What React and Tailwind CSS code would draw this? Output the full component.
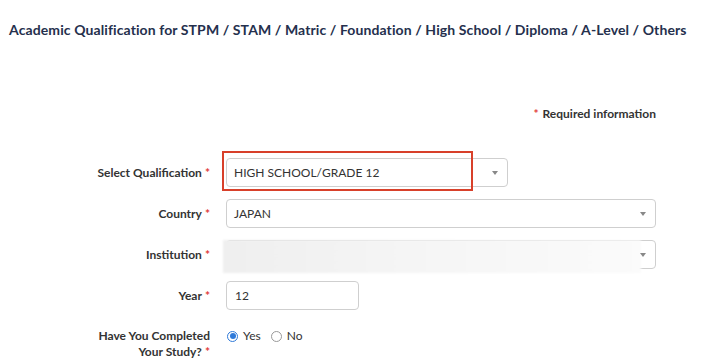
const Req = () => <span className="text-[#e23b3b] ml-[3px]">*</span>

const Caret = () => (
  <span className="absolute right-[9px] top-1/2 -translate-y-1/2 w-0 h-0 border-l-[3px] border-r-[3px] border-t-[4px] border-l-transparent border-r-transparent border-t-[#888]" />
)

const Row = ({ label, children, top = false }) => (
  <div className={`flex ${top ? 'items-start' : 'items-center'}`}>
    <div className="w-[213px] shrink-0 pr-[3px] text-right text-[12px] font-bold text-[#333] leading-[16px]">
      {label}
    </div>
    <div className="flex-1 pl-[13px]">{children}</div>
  </div>
)

const App = () => {
  return (
    <div className="w-[711px] h-[360px] bg-white overflow-hidden" style={{ fontFamily: 'Lato, "Open Sans", sans-serif' }}>
      <h1 className="pl-[9px] pt-[20px] text-[14px] font-bold text-[#25304d] leading-[20px] tracking-[0.1px]">
        Academic Qualification for STPM / STAM / Matric / Foundation / High School / Diploma / A-Level / Others
      </h1>

      <div className="mt-[66px] pr-[55px] text-right text-[12px] font-bold text-[#333] leading-[16px]">
        <span className="text-[#e23b3b] mr-[4px]">*</span>Required information
      </div>

      <div className="mt-[36px] flex flex-col gap-[12px] pr-[55px]">
        <Row label={<>Select Qualification<Req /></>}>
          <div className="relative w-[282px]">
            <div className="relative h-[29px] border border-[#cfcfcf] rounded-[4px] flex items-center px-[7px] text-[12px] text-[#333]">
              HIGH SCHOOL/GRADE 12
              <Caret />
            </div>
            <div className="absolute left-[-4px] top-[-7px] w-[251px] h-[40px] border-2 border-[#d8402a]" />
          </div>
        </Row>

        <Row label={<>Country<Req /></>}>
          <div className="relative h-[29px] border border-[#cfcfcf] rounded-[4px] flex items-center px-[7px] text-[12px] text-[#333]">
            JAPAN
            <Caret />
          </div>
        </Row>

        <Row label={<>Institution<Req /></>}>
          <div className="relative h-[29px] border border-[#cfcfcf] rounded-[4px]">
            <div className="absolute left-[-4px] top-[-1px] bottom-[-5px] right-[14px] bg-gradient-to-r from-[#efefef] via-[#f6f6f6] to-[#fbfbfb] blur-[1px]" />
            <Caret />
          </div>
        </Row>

        <Row label={<>Year<Req /></>}>
          <div className="h-[29px] w-[133px] border border-[#cfcfcf] rounded-[4px] flex items-center px-[8px] text-[12px] text-[#333]">
            12
          </div>
        </Row>

        <div className="mt-[6px]">
          <Row top label={<>Have You Completed<br />Your Study?<Req /></>}>
            <div className="flex items-center gap-[10px] text-[12px] text-[#333] leading-[16px] pl-[1px]">
              <label className="flex items-center gap-[5px]">
                <span className="w-[11px] h-[11px] rounded-full border border-[#2f7ad9] flex items-center justify-center">
                  <span className="w-[6px] h-[6px] rounded-full bg-[#2f7ad9]" />
                </span>
                Yes
              </label>
              <label className="flex items-center gap-[5px]">
                <span className="w-[11px] h-[11px] rounded-full border border-[#999]" />
                No
              </label>
            </div>
          </Row>
        </div>
      </div>
    </div>
  )
}

export default App
